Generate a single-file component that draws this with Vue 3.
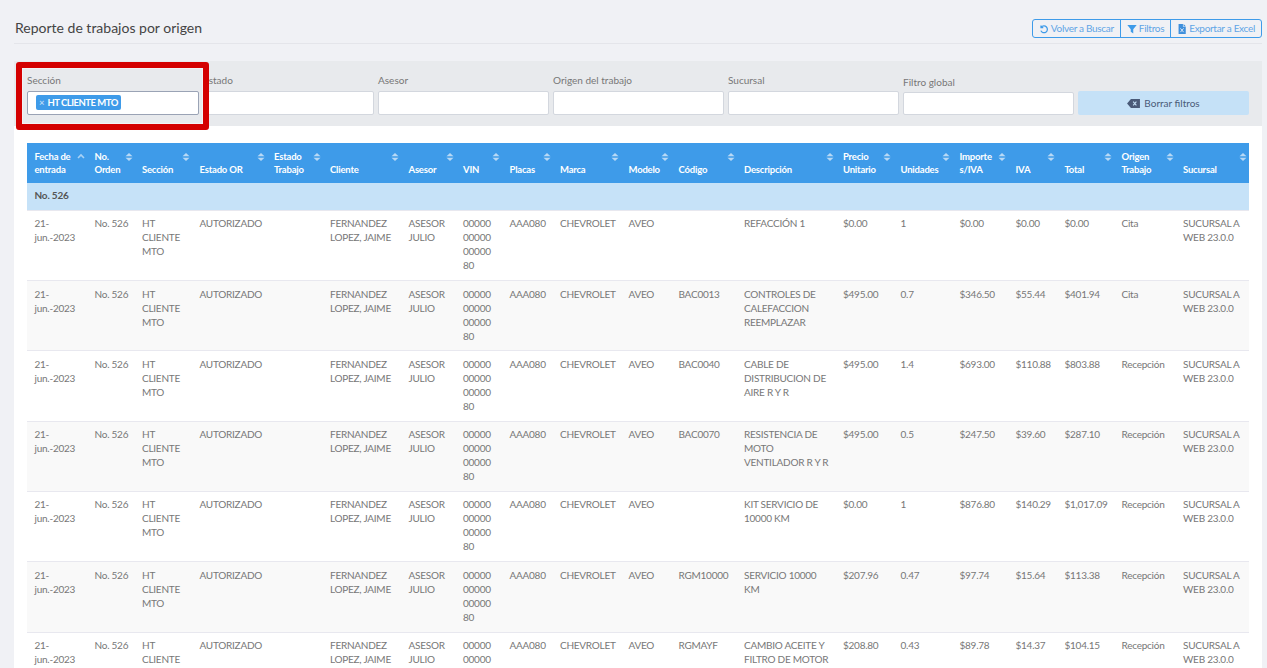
<script setup>
const columns = [
  { label: 'Fecha de entrada', width: 60, active: true },
  { label: 'No. Orden', width: 47.5 },
  { label: 'Sección', width: 57.5 },
  { label: 'Estado OR', width: 74.5 },
  { label: 'Estado Trabajo', width: 56 },
  { label: 'Cliente', width: 78.5 },
  { label: 'Asesor', width: 54.5 },
  { label: 'VIN', width: 46.5 },
  { label: 'Placas', width: 50.5 },
  { label: 'Marca', width: 68.5 },
  { label: 'Modelo', width: 50 },
  { label: 'Código', width: 65.5 },
  { label: 'Descripción', width: 99 },
  { label: 'Precio Unitario', width: 57.5 },
  { label: 'Unidades', width: 59 },
  { label: 'Importe s/IVA', width: 56 },
  { label: 'IVA', width: 49 },
  { label: 'Total', width: 57 },
  { label: 'Origen Trabajo', width: 61.5 },
  { label: 'Sucursal', width: 73.5 },
]

const filters = ['Sección', 'Estado', 'Asesor', 'Origen del trabajo', 'Sucursal', 'Filtro global']

const rows = [
  ['', 'REFACCIÓN 1', '$0.00', '1', '$0.00', '$0.00', '$0.00', 'Cita'],
  ['BAC0013', 'CONTROLES DE CALEFACCION REEMPLAZAR', '$495.00', '0.7', '$346.50', '$55.44', '$401.94', 'Cita'],
  ['BAC0040', 'CABLE DE DISTRIBUCION DE AIRE R Y R', '$495.00', '1.4', '$693.00', '$110.88', '$803.88', 'Recepción'],
  ['BAC0070', 'RESISTENCIA DE MOTO VENTILADOR R Y R', '$495.00', '0.5', '$247.50', '$39.60', '$287.10', 'Recepción'],
  ['', 'KIT SERVICIO DE 10000 KM', '$0.00', '1', '$876.80', '$140.29', '$1,017.09', 'Recepción'],
  ['RGM10000', 'SERVICIO 10000 KM', '$207.96', '0.47', '$97.74', '$15.64', '$113.38', 'Recepción'],
  ['RGMAYF', 'CAMBIO ACEITE Y FILTRO DE MOTOR', '$208.80', '0.43', '$89.78', '$14.37', '$104.15', 'Recepción'],
]

const common = ['21- jun.-2023', 'No. 526', 'HT CLIENTE MTO', 'AUTORIZADO', '', 'FERNANDEZ LOPEZ, JAIME', 'ASESOR JULIO', '00000\n00000\n00000\n80', 'AAA080', 'CHEVROLET', 'AVEO']
</script>

<template>
  <div class="page">
    <header class="top">
      <h1>Reporte de trabajos por origen</h1>
      <div class="btn-group">
        <button type="button">
          <svg viewBox="0 0 16 16" width="10" height="10"><path d="M3.2 2.2v3.6h3.6M3.6 5.4A5.4 5.4 0 1 1 3 10.6" fill="none" stroke="#3e9be9" stroke-width="2"/></svg>
          Volver a Buscar
        </button>
        <button type="button">
          <svg viewBox="0 0 16 16" width="10" height="10"><path d="M0.5 1.5h15L10 8.2V15l-4-2.6V8.2z" fill="#3e9be9"/></svg>
          Filtros
        </button>
        <button type="button">
          <svg viewBox="0 0 16 16" width="10" height="10"><path d="M2.5 0h7v4.5H14V16H2.5zM10.5 0 14 3.5h-3.5z" fill="#3e8fdc"/><path d="M5.5 7l5 6M10.5 7l-5 6" stroke="#f0f1f5" stroke-width="1.4"/></svg>
          Exportar a Excel
        </button>
      </div>
    </header>

    <section class="filters">
      <div v-for="(name, i) in filters" :key="name" class="field" :class="{ low: i === 5 }">
        <label>{{ name }}</label>
        <div class="input">
          <span v-if="i === 0" class="tag"><i>×</i>HT CLIENTE MTO</span>
        </div>
      </div>
      <button type="button" class="clear">
        <svg viewBox="0 0 20 14" width="13" height="9"><path d="M6 0h14v14H6L0 7z" fill="currentColor"/><path d="M9.5 4l5 6M14.5 4l-5 6" stroke="#c5e1f7" stroke-width="1.6"/></svg>
        Borrar filtros
      </button>
      <div class="highlight"></div>
    </section>

    <section class="panel">
      <table>
        <colgroup>
          <col v-for="c in columns" :key="c.label" :style="{ width: c.width + 'px' }" />
        </colgroup>
        <thead>
          <tr>
            <th v-for="c in columns" :key="c.label">
              {{ c.label }}
              <svg class="sort" viewBox="0 0 8 10" width="8" height="10">
                <path v-if="c.active" d="M1 6 4 3l3 3" fill="none" stroke="#a9d2f5" stroke-width="1.6" />
                <template v-else>
                  <path d="M4 1 7.5 4.2h-7z" fill="#b7d9f6" />
                  <path d="M4 9 .5 5.8h7z" fill="#b7d9f6" />
                </template>
              </svg>
            </th>
          </tr>
        </thead>
        <tbody>
          <tr class="group">
            <td :colspan="columns.length">No. 526</td>
          </tr>
          <tr v-for="(r, i) in rows" :key="i" :class="{ even: i % 2 === 1 }">
            <td v-for="(v, j) in common" :key="j" :class="{ vin: j === 7 }">{{ v }}</td>
            <td v-for="(v, j) in r" :key="'r' + j">{{ v }}</td>
            <td>SUCURSAL A WEB 23.0.0</td>
          </tr>
        </tbody>
      </table>
    </section>
  </div>
</template>

<style>
html,
body {
  margin: 0;
  background: #f0f1f5;
}
</style>

<style scoped>
.page {
  height: 668px;
  overflow: hidden;
  padding: 0 5px 0 14px;
  box-sizing: border-box;
  font-family: Lato, "Open Sans", sans-serif;
  font-size: 10px;
  color: #777;
}

.top {
  height: 44px;
  box-sizing: border-box;
  border-bottom: 1px solid #e4e5ea;
  display: flex;
  justify-content: space-between;
  align-items: flex-start;
  padding-top: 19px;
}

h1 {
  margin: -1px 0 0 1px;
  font-size: 14px;
  line-height: 20px;
  font-weight: 400;
  color: #444;
}

.btn-group {
  display: flex;
  height: 19px;
  border: 1px solid #3e9be9;
  border-radius: 3px;
  box-sizing: border-box;
}

.btn-group button {
  border: 0;
  border-left: 1px solid #3e9be9;
  background: transparent;
  color: #5fa5e6;
  font: inherit;
  font-size: 10px;
  letter-spacing: -0.3px;
  line-height: 17px;
  padding: 0 6px;
  display: flex;
  align-items: center;
  gap: 2px;
}

.btn-group button:first-child {
  border-left: 0;
}

.filters {
  position: relative;
  margin-top: 17px;
  height: 65px;
  background: #e8eaed;
  padding: 0 13px;
  display: flex;
  gap: 4px;
  align-items: flex-start;
  box-sizing: border-box;
}

.field {
  width: 171px;
  padding-top: 12px;
}

.field:first-child {
  width: 172px;
}

.field label {
  display: block;
  height: 18px;
  line-height: 14px;
  font-size: 10px;
  color: #777;
}

.field.low {
  padding-top: 14px;
}

.field.low label {
  height: 17px;
}

.field.low .input {
  height: 23px;
}

.input {
  height: 24px;
  box-sizing: border-box;
  background: #fff;
  border: 1px solid #d3d7de;
  border-radius: 2px;
  padding: 3px 8px;
}

.field:first-child .input {
  border-color: #9aa3b5;
}

.tag {
  display: inline-block;
  height: 15px;
  line-height: 15px;
  padding: 0 3px;
  background: #3e9be9;
  border-radius: 2px;
  color: #fff;
  font-size: 9.5px;
  letter-spacing: -0.5px;
  font-weight: 700;
}

.tag i {
  font-style: normal;
  margin-right: 3.5px;
  color: #b7d9f6;
}

.clear {
  width: 171px;
  height: 24px;
  margin-top: 30px;
  border: 0;
  border-radius: 2px;
  background: #c5e1f7;
  color: #4a5a78;
  font: inherit;
  font-size: 10px;
  display: flex;
  align-items: center;
  justify-content: center;
  gap: 4px;
}

.highlight {
  position: absolute;
  left: 2px;
  top: 1px;
  width: 193px;
  height: 68px;
  box-sizing: border-box;
  border: 6px solid #d40000;
  border-radius: 3px;
  box-shadow: inset 0 0 0 1px rgba(255, 255, 255, 0.45);
  pointer-events: none;
}

.panel {
  background: #fff;
  padding: 17px 13px 0;
}

table {
  width: 1222px;
  border-collapse: collapse;
  table-layout: fixed;
}

th {
  position: relative;
  background: #3e9be9;
  color: #fff;
  height: 40px;
  box-sizing: border-box;
  padding: 7px 2px 7px 7.5px;
  font-size: 9.5px;
  letter-spacing: -0.2px;
  line-height: 13px;
  font-weight: 700;
  text-align: left;
  vertical-align: bottom;
}

.sort {
  position: absolute;
  top: 9px;
  right: 2px;
}

td {
  padding: 5.4px 2px 7.9px 7.5px;
  font-size: 10px;
  letter-spacing: -0.25px;
  line-height: 14px;
  vertical-align: top;
  border-bottom: 1px solid #e8e8ef;
}

td.vin {
  white-space: pre-line;
}

tr.even td {
  background: #f9f9f9;
}

tr.group td {
  background: #c6e2f8;
  color: #555;
  font-weight: 700;
  letter-spacing: -0.2px;
  height: 27px;
  box-sizing: border-box;
  padding-top: 5px;
}
</style>
